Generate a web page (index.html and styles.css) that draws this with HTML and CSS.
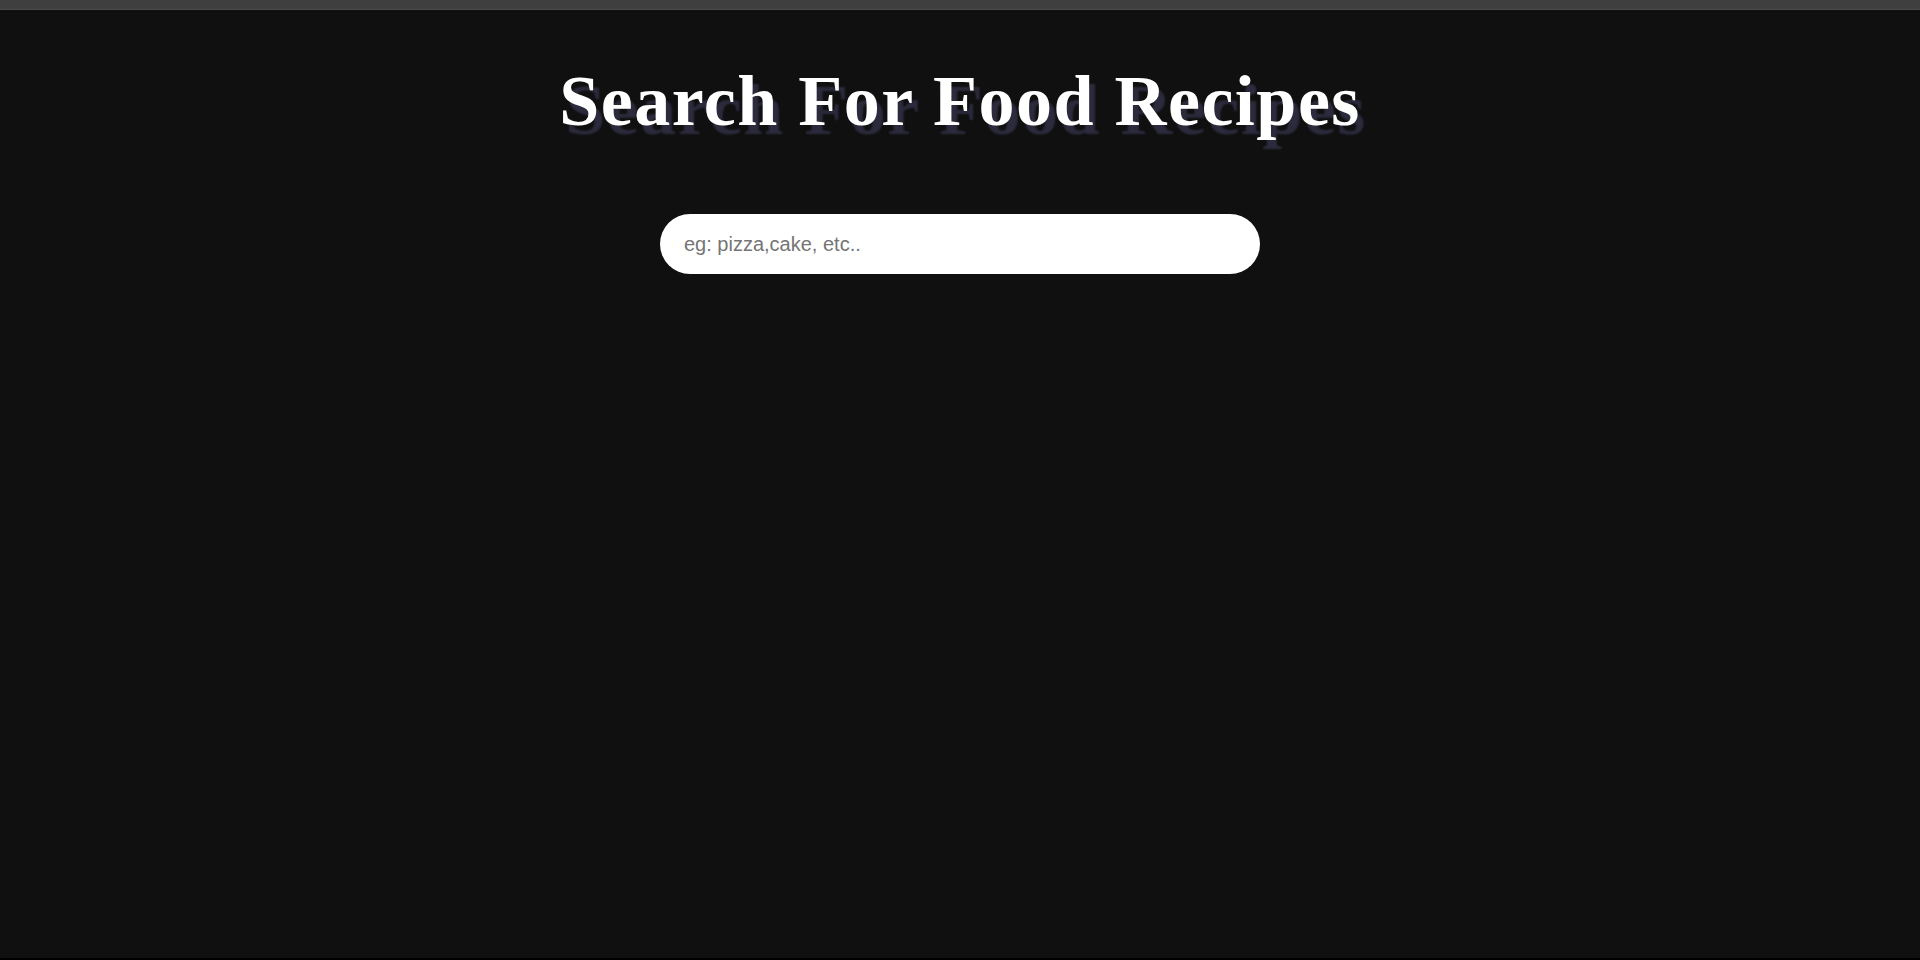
FILE: index.html
```html
<!DOCTYPE html>
<html lang="en">
<head>
<meta charset="utf-8">
<title>Food Recipes</title>
<link rel="stylesheet" href="styles.css">
</head>
<body>
<div class="page">
  <div class="topbar"></div>
  <main class="main">
    <h1 class="title">Search For Food Recipes</h1>
    <form class="search">
      <input class="search-input" type="text" placeholder="eg: pizza,cake, etc..">
    </form>
  </main>
  <div class="bottombar"></div>
</div>
</body>
</html>
```

FILE: styles.css
```css
html, body {
  margin: 0;
  padding: 0;
  background: #101010;
}

.page {
  height: 960px;
  display: flex;
  flex-direction: column;
  overflow: hidden;
}

.topbar {
  height: 9px;
  background: #3f3f3f;
  border-bottom: 1px solid #4b4b4b;
  flex: none;
}

.main {
  flex: 1;
  display: flex;
  flex-direction: column;
  align-items: center;
}

.title {
  margin: 50px 0 0;
  font-family: "Liberation Serif", "Times New Roman", serif;
  font-weight: bold;
  font-size: 72px;
  line-height: 83px;
  letter-spacing: 1.5px;
  color: #ffffff;
  text-shadow: 6px 9px 2px #2b2b3d;
}

.search {
  margin: 71px 0 0;
}

.search-input {
  box-sizing: border-box;
  width: 600px;
  height: 60px;
  border: none;
  outline: none;
  border-radius: 30px;
  background: #ffffff;
  padding: 0 24px;
  font-family: "Liberation Sans", Arial, sans-serif;
  font-size: 20px;
  color: #333333;
}

.search-input::placeholder {
  color: #757575;
}

.bottombar {
  height: 2px;
  background: #000000;
  flex: none;
}
```
